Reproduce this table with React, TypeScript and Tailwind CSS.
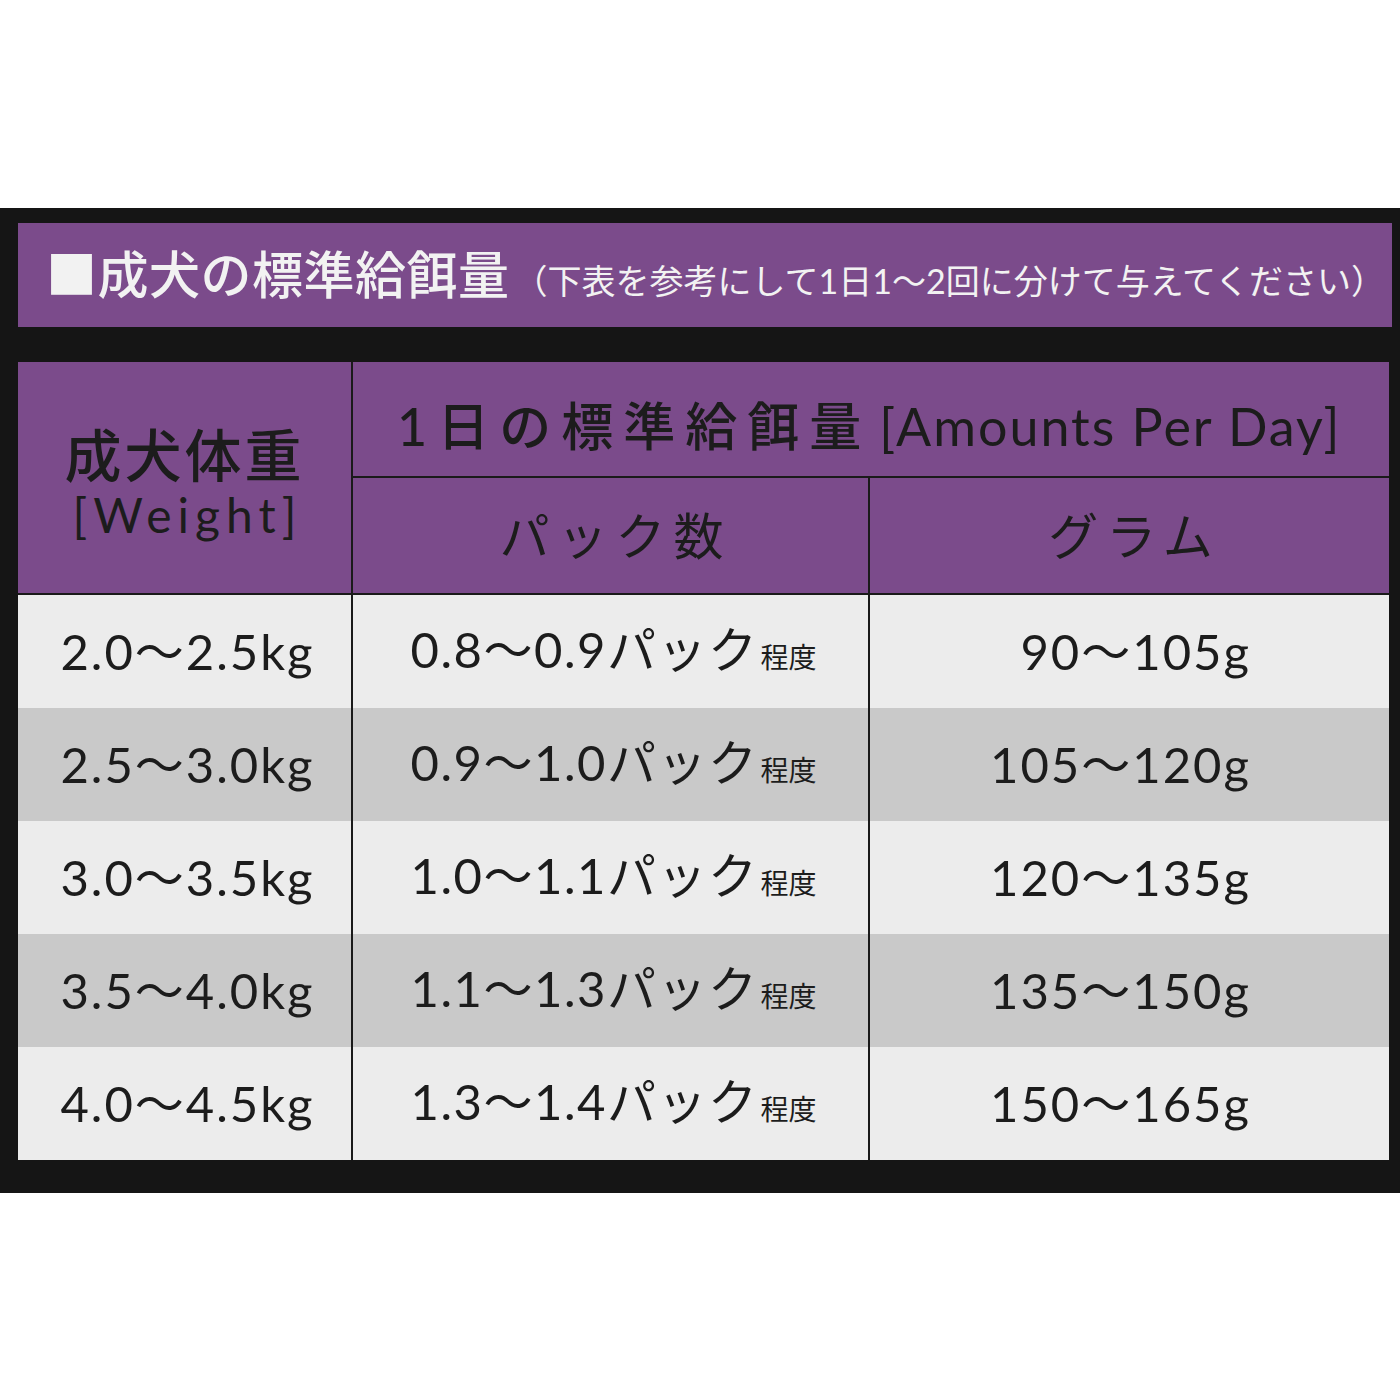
import React from "react";

const font = { fontFamily: '"Lato", "Noto Sans CJK JP", sans-serif' };

const rows = [
  { w: "2.0～2.5kg", p: "0.8～0.9", g: "90～105g", bg: "bg-[#ececec]" },
  { w: "2.5～3.0kg", p: "0.9～1.0", g: "105～120g", bg: "bg-[#c9c9c9]" },
  { w: "3.0～3.5kg", p: "1.0～1.1", g: "120～135g", bg: "bg-[#ececec]" },
  { w: "3.5～4.0kg", p: "1.1～1.3", g: "135～150g", bg: "bg-[#c9c9c9]" },
  { w: "4.0～4.5kg", p: "1.3～1.4", g: "150～165g", bg: "bg-[#ececec]" },
];

const App = () => (
  <div className="w-[1400px] h-[1400px] bg-white pt-[208px]" style={font}>
    <div className="bg-[#151515] pl-[18px] pr-[11px] pt-[15px] pb-[33px]">
      {/* タイトル帯 */}
      <div className="h-[104px] bg-[#7b4b8b] flex items-baseline whitespace-nowrap pl-[28px] pt-[22px] text-[#f2f2f2] mr-[-3px]">
        <span className="shrink-0 text-[51px] leading-[60px] font-medium tracking-[0.5px]">■成犬の標準給餌量</span>
        <span className="shrink-0 text-[34px] leading-[40px] ml-[4px]">（下表を参考にして1日1～2回に分けて与えてください）</span>
      </div>

      {/* 表 */}
      <div className="mt-[35px] text-[#1c1c1c]">
        <div className="flex h-[231px] bg-[#7b4b8b]">
          <div className="w-[333px] flex flex-col items-center justify-center pt-[10px]">
            <div className="text-[57px] leading-[64px] font-medium tracking-[3px]">成犬体重</div>
            <div className="text-[48px] leading-[56px] tracking-[6px] ml-[6px]">[Weight]</div>
          </div>
          <div className="flex-1 border-l-2 border-[#1a1a1a] flex flex-col">
            <div className="h-[116px] border-b-2 border-[#1a1a1a] flex items-center whitespace-nowrap pl-[44px] pt-[14px]">
              <span className="text-[52px] leading-[60px] font-medium tracking-[10px]">1日の標準給餌量</span>
              <span className="text-[52px] leading-[60px] tracking-[2px] ml-[8px]">[Amounts Per Day]</span>
            </div>
            <div className="flex-1 flex">
              <div className="w-[515px] flex items-center justify-center text-[50px] leading-[60px] tracking-[8px] pl-[10px]">パック数</div>
              <div className="flex-1 border-l-2 border-[#1a1a1a] flex items-center justify-center text-[50px] leading-[60px] tracking-[8px] pl-[10px]">グラム</div>
            </div>
          </div>
        </div>

        <div className="border-t-2 border-[#1a1a1a]">
          {rows.map((r) => (
            <div key={r.w} className={`flex h-[113px] ${r.bg}`}>
              <div className="w-[333px] flex items-center justify-center text-[49px] tracking-[2px] pl-[6px]">{r.w}</div>
              <div className="w-[517px] border-l-2 border-[#1a1a1a] flex items-baseline justify-center pt-[26px] pl-[6px]">
                <span className="text-[49px] leading-[56px] tracking-[1.5px]">{r.p}パック</span>
                <span className="text-[28px] leading-[32px] ml-[2px]">程度</span>
              </div>
              <div className="flex-1 border-l-2 border-[#1a1a1a] flex items-center justify-end pr-[138px] text-[49px] tracking-[2px]">{r.g}</div>
            </div>
          ))}
        </div>
      </div>
    </div>
  </div>
);

export default App;
